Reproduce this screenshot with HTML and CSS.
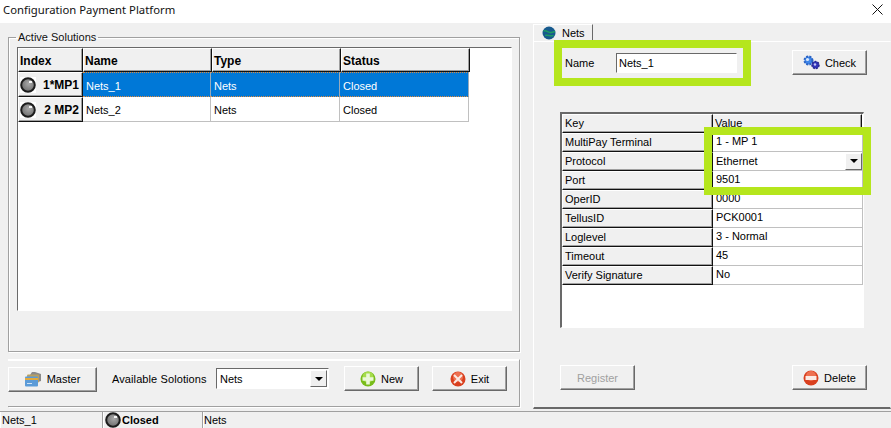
FILE: index.html
```html
<!DOCTYPE html>
<html lang="en">
<head>
<meta charset="utf-8">
<title>Configuration Payment Platform</title>
<link rel="stylesheet" href="styles.css">
</head>
<body>
<svg class="defs" width="0" height="0" aria-hidden="true">
  <defs>
    <radialGradient id="ledfill" cx="0.55" cy="0.4" r="0.7"><stop offset="0" stop-color="#a8a8a8"/><stop offset="1" stop-color="#646464"/></radialGradient>
    <symbol id="led" viewBox="0 0 16 16">
      <circle cx="8" cy="8" r="6.8" fill="url(#ledfill)" stroke="#1c1c1c" stroke-width="2"/>
      <rect x="9" y="4" width="3" height="2" fill="#f4f4f4"/>
    </symbol>
  </defs>
</svg>
<div class="window">
  <header class="titlebar">
    <span class="title">Configuration Payment Platform</span>
    <svg class="close" width="11" height="11" viewBox="0 0 11 11"><path d="M.5.5l10 10M10.5.5l-10 10" stroke="#111" fill="none"/></svg>
  </header>
  <main class="main">
    <section class="left">
      <fieldset class="group solutions">
        <legend>Active Solutions</legend>
        <div class="grid">
          <div class="row head">
            <div class="fixed c-index b">Index</div>
            <div class="fixed c-col b">Name</div>
            <div class="fixed c-col b">Type</div>
            <div class="fixed c-col b">Status</div>
          </div>
          <div class="row sel">
            <div class="fixed c-index b idx"><svg class="led" width="16" height="16"><use href="#led"/></svg><span>1*MP1</span></div>
            <div class="cell c-col">Nets_1</div>
            <div class="cell c-col">Nets</div>
            <div class="cell c-col">Closed</div>
          </div>
          <div class="row">
            <div class="fixed c-index b idx"><svg class="led" width="16" height="16"><use href="#led"/></svg><span>2 MP2</span></div>
            <div class="cell c-col">Nets_2</div>
            <div class="cell c-col">Nets</div>
            <div class="cell c-col">Closed</div>
          </div>
        </div>
      </fieldset>
      <div class="group actions">
        <button class="btn master" type="button">
          <svg width="17" height="15" viewBox="0 0 17 15"><path d="M5 3l2-3h3l6 2v7l-3 1z" fill="#8a8a8a"/><rect x="2" y="2.5" width="12" height="8" rx="1" fill="#b9a062"/><rect x="0" y="4.5" width="13" height="10" rx="1" fill="#5b9bd8"/><rect x="0" y="6" width="13" height="2" fill="#e2a93c"/><rect x="2" y="11" width="5" height="1" fill="#cfe2f5"/></svg>
          <span>Master</span>
        </button>
        <span class="avail">Available Solotions</span>
        <div class="combo">
          <span class="combo-text">Nets</span>
          <span class="drop"><i class="arrow"></i></span>
        </div>
        <button class="btn act" type="button">
          <svg width="16" height="16" viewBox="0 0 16 16"><circle cx="8" cy="8" r="7.5" fill="#78bc1a"/><circle cx="8" cy="6" r="5.5" fill="#a5dc4a"/><path d="M6.2 2.5h3.6v3.7h3.7v3.6H9.800v3.700H6.200V9.800H2.500V6.200h3.700z" fill="#eaf8d8"/></svg>
          <span>New</span>
        </button>
        <button class="btn act" type="button">
          <svg width="16" height="16" viewBox="0 0 16 16"><circle cx="8" cy="8" r="7.5" fill="#d9401f"/><circle cx="8" cy="6" r="5" fill="#ee7050"/><path d="M4 4l8 8M12 4l-8 8" stroke="#fbeae4" stroke-width="2" fill="none"/></svg>
          <span>Exit</span>
        </button>
      </div>
    </section>
    <section class="right">
      <div class="tabs">
        <div class="tab">
          <svg width="14" height="14" viewBox="0 0 14 14"><circle cx="7" cy="7" r="6.5" fill="#175a8e"/><path d="M1.500 5c3-1.500 5 2.500 8 1.500l3.500-1M3 9.500c3-1 5 1 8.500 0" stroke="#1f9c64" stroke-width="1.600" fill="none"/></svg>
          <span>Nets</span>
        </div>
      </div>
      <div class="page">
        <div class="name-row">
          <span class="name-label">Name</span>
          <div class="input">Nets_1</div>
          <button class="btn act check" type="button">
            <svg width="17" height="15" viewBox="0 0 17 15"><circle cx="5.500" cy="5.500" r="4" fill="#3f86e8" stroke="#2a62c4" stroke-width="2" stroke-dasharray="2 1.200"/><circle cx="4.500" cy="4.500" r="1.600" fill="#dbe8fb"/><circle cx="12.500" cy="10" r="3.500" fill="#3234b8" stroke="#26288e" stroke-width="1.500" stroke-dasharray="2 1"/><circle cx="12" cy="9.500" r="1.200" fill="#c4c5f4"/></svg>
            <span>Check</span>
          </button>
        </div>
        <div class="props">
          <div class="prow phead"><div class="key">Key</div><div class="val-h">Value</div></div>
          <div class="prow"><div class="key">MultiPay Terminal</div><div class="val">1 - MP 1</div></div>
          <div class="prow"><div class="key">Protocol</div><div class="val val-combo"><span>Ethernet</span><span class="drop"><i class="arrow"></i></span></div></div>
          <div class="prow"><div class="key">Port</div><div class="val">9501</div></div>
          <div class="prow"><div class="key">OperID</div><div class="val">0000</div></div>
          <div class="prow"><div class="key">TellusID</div><div class="val">PCK0001</div></div>
          <div class="prow"><div class="key">Loglevel</div><div class="val">3 - Normal</div></div>
          <div class="prow"><div class="key">Timeout</div><div class="val">45</div></div>
          <div class="prow"><div class="key">Verify Signature</div><div class="val">No</div></div>
        </div>
        <div class="page-actions">
          <button class="btn act disabled" type="button" disabled><span>Register</span></button>
          <button class="btn act" type="button">
            <svg width="16" height="16" viewBox="0 0 16 16"><circle cx="8" cy="8" r="7.500" fill="#d9401f"/><circle cx="8" cy="6" r="5" fill="#ee7050"/><rect x="2.500" y="6" width="11" height="4" fill="#fbeae4"/></svg>
            <span>Delete</span>
          </button>
        </div>
      </div>
    </section>
  </main>
  <footer class="status">
    <div class="sp sp1">Nets_1</div>
    <div class="sp sp2"><svg class="led" width="16" height="16"><use href="#led"/></svg><b>Closed</b></div>
    <div class="sp sp3">Nets</div>
  </footer>
  <div class="hl hl-name"></div>
  <div class="hl hl-props"></div>
</div>
</body>
</html>
```

FILE: styles.css
```css
* { box-sizing: border-box; }
html, body { margin: 0; padding: 0; }
body { width: 891px; height: 428px; overflow: hidden; background: #f0f0f0; color: #000; font: 11px/14px "Liberation Sans", Arial, sans-serif; }
.defs { position: absolute; }
.window { position: relative; width: 891px; height: 428px; display: flex; flex-direction: column; }

.titlebar { height: 23px; flex: none; background: #fff; display: flex; align-items: center; justify-content: space-between; padding: 0 8px 4px 3px; }
.title { font: 11.3px/16px "Noto Sans", sans-serif; color: #111; }

.main { height: 389px; flex: none; display: flex; border-bottom: 1px solid #a0a0a0; }
.left { width: 533px; flex: none; padding: 8px 13px 0 8px; display: flex; flex-direction: column; }

.group { border: 1px solid #a0a0a0; box-shadow: inset 1px 1px 0 #fff, 1px 1px 0 #fff; background: #f0f0f0; }
fieldset.group { margin: 0; padding: 0 7px 0 8px; min-width: 0; height: 321px; }
legend { padding: 0 2px; margin-left: -1px; font-size: 11px; line-height: 13px; color: #111; }
.solutions { flex: none; }

.grid { width: 495px; height: 264px; margin-top: 3px; background: #fff; border-top: 1px solid #696969; border-left: 1px solid #696969; border-right: 1px solid #fff; border-bottom: 1px solid #fff; }
.row { display: flex; height: 25px; }
.head { height: 24px; }
.fixed { background: #f0f0f0; border-top: 1px solid #fff; border-left: 1px solid #fff; border-right: 1px solid #111; border-bottom: 1px solid #111; box-shadow: inset -1px -1px 0 #a0a0a0; display: flex; align-items: center; padding: 2px 0 0 1px; }
.b { font-weight: bold; font-size: 12px; }
.c-index { width: 65px; flex: none; }
.c-col { width: 129px; flex: none; }
.head .c-col:first-of-type { width: 128px; }
.cell { border-right: 1px solid #c0c0c0; border-bottom: 1px solid #c0c0c0; display: flex; align-items: center; padding: 2px 0 0 3px; }
.row .cell:nth-child(2) { width: 128px; }
.sel .cell { background: #0078d7; color: #fff; border-right-color: #9ab; border-bottom: 1px dotted #e08a3c; border-top: 1px dotted #e08a3c; }
.idx { justify-content: space-between; padding: 0 3px 0 1px; }
.idx .led { background: #fff; }
.led { display: block; flex: none; }

.actions { margin-top: 7px; width: 512px; height: 48px; display: flex; align-items: center; padding: 0 0 9px 0; border-left: 0; box-shadow: inset 0 1px 0 #fff, 1px 1px 0 #fff; border-color: #fff #a0a0a0 #a0a0a0 transparent; }
.btn { height: 25px; width: 75px; flex: none; padding: 0; margin: 0; display: inline-flex; align-items: center; justify-content: center; gap: 5px; font: 11px/14px "Liberation Sans", Arial, sans-serif; color: #000; background: #f0f0f0; border: 1px solid; border-color: #fff #696969 #696969 #fff; box-shadow: inset -1px -1px 0 #a0a0a0; }
.master { width: 89px; margin-top: 1px; }
.avail { margin-left: 15px; width: 89px; flex: none; white-space: nowrap; letter-spacing: 0.1px; }
.combo { margin-left: 15px; width: 113px; height: 21px; flex: none; background: #fff; border: 1px solid; border-color: #696969 #fff #fff #696969; display: flex; align-items: center; justify-content: space-between; padding: 0 1px 0 3px; }
.drop { width: 17px; height: 17px; background: #f0f0f0; border: 1px solid; border-color: #fff #696969 #696969 #fff; display: flex; align-items: center; justify-content: center; flex: none; }
.arrow { width: 0; height: 0; border: 4px solid transparent; border-top-color: #000; border-bottom: 0; }
.actions .act { margin-left: 13px; }
.actions .combo + .act { margin-left: 15px; }

.right { flex: 1; display: flex; flex-direction: column; min-width: 0; }
.tabs { height: 18px; flex: none; display: flex; padding-top: 1px; }
.tab { width: 60px; height: 18px; background: #f0f0f0; border: 1px solid; border-color: #fff #696969 transparent #fff; display: flex; align-items: center; gap: 6px; padding: 0 0 1px 8px; }
.page { width: 358px; height: 368px; flex: none; border: 1px solid; border-color: #fff transparent #696969 #fff; border-bottom-width: 2px; display: flex; flex-direction: column; padding: 8px 0 0 26px; }
.name-row { display: flex; align-items: center; height: 25px; }
.name-label { width: 51px; flex: none; margin-left: 5px; }
.input { width: 121px; height: 20px; flex: none; background: #fff; border: 1px solid; border-color: #696969 #fff #fff #696969; padding: 2px 0 0 2px; }
.check { margin-left: 55px; }
.props { margin-top: 37px; width: 304px; height: 216px; background: #fff; border: 1px solid; border-color: #696969 #fff #fff #696969; border-left-width: 2px; border-top-width: 2px; }
.prow { display: flex; height: 19px; }
.key { width: 151px; flex: none; background: #f0f0f0; border-top: 1px solid #fff; border-left: 1px solid #fff; border-right: 1px solid #111; border-bottom: 1px solid #111; box-shadow: inset -1px -1px 0 #a0a0a0; padding: 1px 0 0 2px; }
.val-h { width: 149px; background: #f0f0f0; border-right: 1px solid #111; border-bottom: 1px solid #111; border-top: 1px solid #fff; padding: 1px 0 0 2px; box-shadow: inset -1px -1px 0 #a0a0a0; }
.val { width: 150px; border-right: 1px solid #c0c0c0; border-bottom: 1px solid #c0c0c0; padding: 1px 0 0 3px; }
.val-combo { display: flex; justify-content: space-between; padding: 0 0 0 3px; align-items: center; }
.page-actions { margin-top: 37px; width: 307px; display: flex; justify-content: space-between; }
.disabled { color: #a0a0a0; }

.status { height: 16px; flex: none; display: flex; gap: 2px; }
.sp { height: 16px; border-left: 1px solid #a0a0a0; padding: 1px 0 0 1px; box-shadow: inset 1px 0 0 #fff; white-space: nowrap; }
.sp1 { width: 100px; border-left: 0; padding-left: 2px; }
.sp2 { width: 98px; display: flex; align-items: center; gap: 1px; padding: 0 0 0 2px; }
.sp3 { flex: 1; }

.hl { position: absolute; border: 8px solid #b5e61d; pointer-events: none; }
.hl-name { left: 554px; top: 40px; width: 197px; height: 46px; }
.hl-props { left: 704px; top: 127px; width: 167px; height: 68px; }
```
